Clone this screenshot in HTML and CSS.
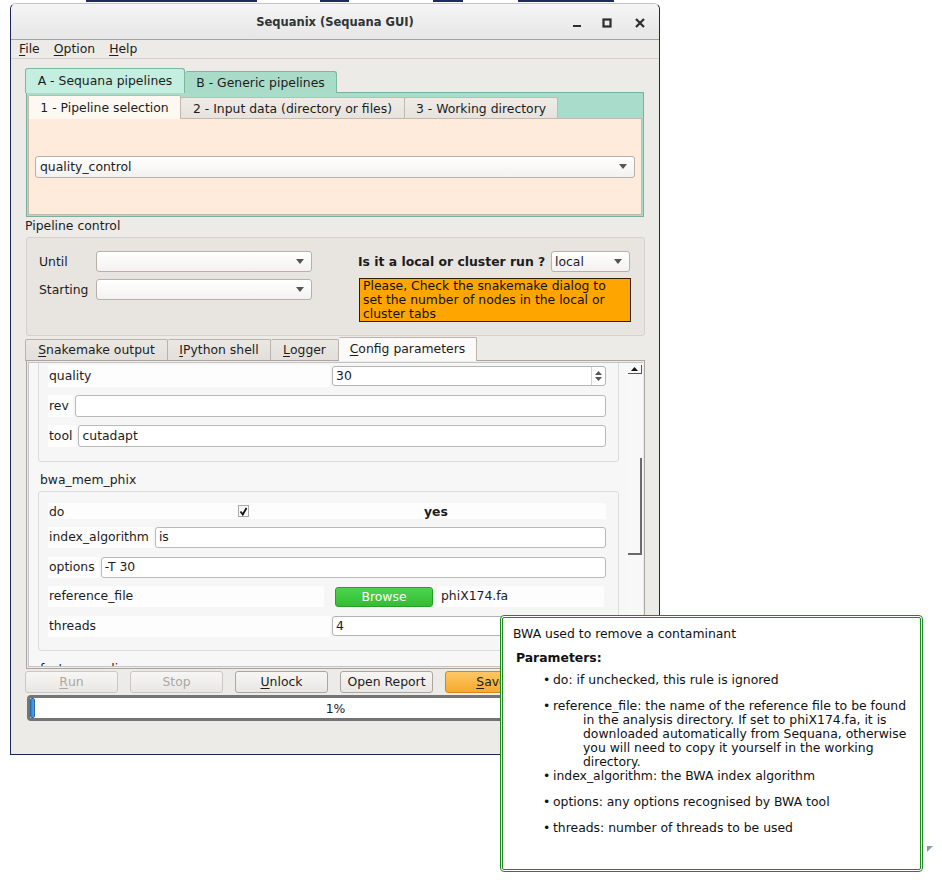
FILE: index.html
```html
<!DOCTYPE html>
<html>
<head>
<meta charset="utf-8">
<title>Sequanix (Sequana GUI)</title>
<link rel="stylesheet" href="styles.css">
</head>
<body>
<div class="desk">
  <div class="topstrip">
    <span class="seg s1"></span><span class="seg s2"></span><span class="seg s3"></span><span class="seg s4"></span>
  </div>
  <div class="window">
    <div class="titlebar">
      <div class="tb-side"></div>
      <div class="title">Sequanix (Sequana GUI)</div>
      <div class="tb-side wm">
        <svg class="wm-min" width="10" height="10" viewBox="0 0 10 10"><rect x="1" y="7" width="8" height="2" fill="#2e2e2e"/></svg>
        <svg class="wm-max" width="10" height="10" viewBox="0 0 10 10"><rect x="1.5" y="1.5" width="7" height="7" fill="none" stroke="#2e2e2e" stroke-width="2.2"/></svg>
        <svg class="wm-close" width="10" height="10" viewBox="0 0 10 10"><path d="M1 1 L9 9 M9 1 L1 9" stroke="#2e2e2e" stroke-width="2.2"/></svg>
      </div>
    </div>
    <div class="menubar">
      <span class="mi"><u>F</u>ile</span>
      <span class="mi"><u>O</u>ption</span>
      <span class="mi"><u>H</u>elp</span>
    </div>

    <div class="content">
      <div class="otabs">
        <div class="obar">
          <div class="otab ota sel">A - Sequana pipelines</div>
          <div class="otab otb">B - Generic pipelines</div>
        </div>
        <div class="opane">
          <div class="ibar">
            <div class="itab it1 sel">1 - Pipeline selection</div>
            <div class="itab it2">2 - Input data (directory or files)</div>
            <div class="itab it3">3 - Working directory</div>
          </div>
          <div class="ipane">
            <div class="combo combo-main">
              <span class="ctext">quality_control</span>
              <svg class="arrow" width="8" height="5" viewBox="0 0 8 5"><path d="M0 0 H8 L4 5 Z" fill="#555"/></svg>
            </div>
          </div>
        </div>
      </div>

      <div class="pc-label">Pipeline control</div>
      <div class="pc-group">
        <div class="pc-left">
          <div class="pc-row">
            <span class="pc-lab">Until</span>
            <div class="combo combo-pc"><span class="ctext"></span><svg class="arrow" width="8" height="5" viewBox="0 0 8 5"><path d="M0 0 H8 L4 5 Z" fill="#555"/></svg></div>
          </div>
          <div class="pc-row">
            <span class="pc-lab">Starting</span>
            <div class="combo combo-pc"><span class="ctext"></span><svg class="arrow" width="8" height="5" viewBox="0 0 8 5"><path d="M0 0 H8 L4 5 Z" fill="#555"/></svg></div>
          </div>
        </div>
        <div class="pc-right">
          <div class="pc-row">
            <span class="run-q">Is it a local or cluster run ?</span>
            <div class="combo combo-local"><span class="ctext">local</span><svg class="arrow" width="8" height="5" viewBox="0 0 8 5"><path d="M0 0 H8 L4 5 Z" fill="#555"/></svg></div>
          </div>
          <div class="note">Please, Check the snakemake dialog to<br>set the number of nodes in the local or<br>cluster tabs</div>
        </div>
      </div>

      <div class="btabs">
        <div class="bbar">
          <div class="btab bt1"><u>S</u>nakemake output</div>
          <div class="btab bt2"><u>I</u>Python shell</div>
          <div class="btab bt3"><u>L</u>ogger</div>
          <div class="btab bt4 sel"><u>C</u>onfig parameters</div>
        </div>
        <div class="bpane">
          <div class="scroll">
            <div class="viewport">
              <div class="scontent">
                <div class="grp g1">
                  <div class="frow">
                    <div class="lab grow">quality</div>
                    <div class="spin"><span class="stext">30</span><div class="sbtns"><svg width="7" height="4" viewBox="0 0 7 4"><path d="M0 4 H7 L3.5 0 Z" fill="#555"/></svg><svg width="7" height="4" viewBox="0 0 7 4"><path d="M0 0 H7 L3.5 4 Z" fill="#555"/></svg></div></div>
                  </div>
                  <div class="frow">
                    <div class="lab">rev</div>
                    <div class="edit"></div>
                  </div>
                  <div class="frow">
                    <div class="lab">tool</div>
                    <div class="edit">cutadapt</div>
                  </div>
                </div>
                <div class="gtitle">bwa_mem_phix</div>
                <div class="grp g2">
                  <div class="frow dorow">
                    <div class="dcell">do</div>
                    <div class="dcell"><span class="chk"><svg width="9" height="9" viewBox="0 0 9 9"><path d="M1.5 4.5 L3.8 7.5 L7.5 1" fill="none" stroke="#111" stroke-width="1.8"/></svg></span></div>
                    <div class="dcell yes">yes</div>
                  </div>
                  <div class="frow r2">
                    <div class="lab">index_algorithm</div>
                    <div class="edit">is</div>
                  </div>
                  <div class="frow r2">
                    <div class="lab">options</div>
                    <div class="edit">-T 30</div>
                  </div>
                  <div class="frow r2">
                    <div class="lab lwide">reference_file</div>
                    <div class="browse">Browse</div>
                    <div class="fname">phiX174.fa</div>
                  </div>
                  <div class="frow r2">
                    <div class="lab lwide2">threads</div>
                    <div class="spin"><span class="stext">4</span><div class="sbtns"><svg width="7" height="4" viewBox="0 0 7 4"><path d="M0 4 H7 L3.5 0 Z" fill="#555"/></svg><svg width="7" height="4" viewBox="0 0 7 4"><path d="M0 0 H7 L3.5 4 Z" fill="#555"/></svg></div></div>
                  </div>
                </div>
                <div class="gtitle">fastq_sampling</div>
              </div>
            </div>
            <div class="vbar">
              <div class="vup"><svg width="7" height="4" viewBox="0 0 7 4"><path d="M0 4 H7 L3.5 0 Z" fill="#111"/></svg></div>
              <div class="vslider"></div>
            </div>
          </div>
        </div>
      </div>

      <div class="buttons">
        <div class="btn dis"><u>R</u>un</div>
        <div class="btn dis">Stop</div>
        <div class="btn"><u>U</u>nlock</div>
        <div class="btn">Open Report</div>
        <div class="btn save"><u>S</u>ave</div>
      </div>
      <div class="progress">
        <div class="chunk"></div>
        <span class="ptext">1%</span>
      </div>
    </div>
  </div>

  <div class="tip">
    <p class="tip-title">BWA used to remove a contaminant</p>
    <p class="tip-h">Parameters:</p>
    <ul class="tip-list">
      <li>do: if unchecked, this rule is ignored</li>
      <li>reference_file: the name of the reference file to be found<span class="cont">in the analysis directory. If set to phiX174.fa, it is<br>downloaded automatically from Sequana, otherwise<br>you will need to copy it yourself in the working<br>directory.</span></li>
      <li class="tight">index_algorithm: the BWA index algorithm</li>
      <li>options: any options recognised by BWA tool</li>
      <li>threads: number of threads to be used</li>
    </ul>
  </div>
  <svg class="grip" width="6" height="6" viewBox="0 0 6 6"><path d="M0 0 H6 L0 6 Z" fill="#8c98ae"/></svg>
</div>
</body>
</html>
```

FILE: styles.css
```css
* { box-sizing: border-box; }
body {
  margin: 0;
  background: #fff;
  font-family: "DejaVu Sans", "Noto Sans", sans-serif;
  font-size: 12.4px;
  color: #1c1c1c;
}
u { text-decoration: underline; text-underline-offset: 2px; }

.desk {
  position: relative;
  width: 942px;
  height: 892px;
  overflow: hidden;
  background: #fff;
}

/* background window fragments at top */
.topstrip { height: 3px; display: flex; align-items: flex-start; }
.seg { height: 2px; background: #1f2a5c; display: block; }
.s1 { margin-left: 86px; width: 171px; }
.s2 { margin-left: 63px; width: 29px; }
.s3 { margin-left: 84px; width: 30px; }
.s4 { margin-left: 55px; width: 96px; }

.window {
  margin-left: 10px;
  width: 650px;
  height: 752px;
  border: 1px solid #1d2552;
  border-top: 1px solid #c4c4c4;
  border-radius: 6px 6px 0 0;
  background: #edebe7;
  display: flex;
  flex-direction: column;
  overflow: hidden;
}

.titlebar {
  height: 36px;
  flex: none;
  display: grid;
  grid-template-columns: 1fr auto 1fr;
  align-items: center;
  background: linear-gradient(#f5f5f5, #e6e6e6);
  border-bottom: 1px solid #a3a3a3;
  border-radius: 5px 5px 0 0;
}
.title {
  font-weight: bold;
  font-size: 11.5px;
  color: #2e3436;
  padding-top: 1px;
}
.wm { display: flex; justify-content: flex-end; align-items: center; padding-top: 2px; }
.wm svg { display: block; }
.wm-min { margin-right: 20px; }
.wm-max { margin-right: 23px; }
.wm-close { margin-right: 14px; }

.menubar {
  height: 19px;
  flex: none;
  display: flex;
  align-items: center;
  padding-left: 1px;
  border-bottom: 1px solid #d5d1cc;
}
.mi { padding: 0 7px; line-height: 18px; }

.content {
  flex: 1;
  padding: 9px 14px 0 15px;
  display: flex;
  flex-direction: column;
}

/* outer tabs */
.obar { display: flex; align-items: flex-end; height: 25px; margin-bottom: -1px; }
.otab {
  height: 22px;
  display: flex; align-items: center; justify-content: center;
  padding-bottom: 1px;
  background: #a8dcc9;
  border: 1px solid #7fb6a1;
  border-bottom: none;
  border-radius: 3px 3px 0 0;
  color: #1c1c1c;
}
.ota { width: 160px; margin-left: -1px; }
.otb { width: 152px; border-left: none; }
.otab.sel { height: 25px; background: #c4eee0; position: relative; z-index: 1; }
.opane {
  height: 125px;
  margin-right: 1px;
  background: #a9dcca;
  border: 1px solid #78b09b;
  padding: 2px 1px 1px 1px;
  display: flex;
  flex-direction: column;
}
.ibar { display: flex; align-items: flex-end; height: 24px; margin-bottom: -1px; }
.itab {
  height: 22px;
  display: flex; align-items: center; justify-content: center;
  padding-bottom: 1px;
  background: linear-gradient(#efebe7, #e6e2dd);
  border: 1px solid #c3b9ae;
  border-bottom: none;
  border-radius: 2px 2px 0 0;
}
.it1 { width: 153px; }
.it2 { width: 224px; border-left: none; }
.it3 { width: 153px; border-left: none; }
.itab.sel { height: 24px; background: #fef8f2; position: relative; z-index: 1; }
.ipane {
  flex: 1;
  background: #feebdc;
  border: 1px solid #c6b8aa;
  display: flex;
  align-items: center;
  padding: 0 6px 0 6px;
}

.combo {
  height: 22px;
  display: flex;
  align-items: center;
  justify-content: space-between;
  background: linear-gradient(#ffffff, #f4f2f0);
  border: 1px solid #b7b1aa;
  border-radius: 3px;
  padding: 0 7px 1px 4px;
}
.combo .arrow { display: block; }
.combo-main { width: 600px; }

/* pipeline control */
.pc-label { height: 20px; line-height: 17px; margin-left: -1px; }
.pc-group {
  height: 99px;
  background: #e8e5e1;
  border: 1px solid #d5d1cc;
  border-radius: 3px;
  display: flex;
  padding: 13px 14px 0 12px;
}
.pc-left { width: 273px; display: flex; flex-direction: column; gap: 7px; }
.pc-row { display: flex; align-items: center; height: 21px; }
.pc-lab { width: 57px; padding-bottom: 1px; }
.combo-pc { width: 216px; height: 21px; }
.pc-right { width: 272px; margin-left: 46px; display: flex; flex-direction: column; }
.run-q { font-weight: bold; width: 193px; padding-bottom: 1px; }
.combo-local { width: 79px; height: 21px; padding-left: 3px; }
.note {
  margin-top: 6px;
  margin-left: 1px;
  width: 272px;
  height: 44px;
  background: #ffa500;
  border: 1px solid #2b2000;
  line-height: 14px;
  padding: 0 3px;
  color: #111;
  white-space: nowrap;
}

/* bottom tabs */
.btabs { margin-top: 1px; display: flex; flex-direction: column; }
.bbar { display: flex; align-items: flex-end; height: 24px; margin-bottom: -1px; }
.btab {
  height: 22px;
  display: flex; align-items: center; justify-content: center;
  padding-bottom: 2px;
  background: linear-gradient(#ebe8e4, #e2dfdb);
  border: 1px solid #b8b3ad;
  border-bottom: none;
  border-radius: 2px 2px 0 0;
}
.bt1 { width: 143px; margin-left: -1px; }
.bt2 { width: 103px; border-left: none; }
.bt3 { width: 68px; border-left: none; }
.bt4 { width: 138px; border-left: none; }
.btab.sel { height: 24px; background: #fbfaf9; position: relative; z-index: 1; }
.bpane {
  height: 309px;
  background: #edebe7;
  border: 1px solid #aaa59f;
  padding: 1px;
}
.scroll {
  height: 100%;
  border: 1px solid #c4c4c4;
  border-right: none;
  display: flex;
  background: #f7f7f7;
}
.viewport { flex: 1; overflow: hidden; }
.scontent { margin-top: -10px; padding-left: 9px; width: 590px; }
.grp {
  border: 1px solid #dcdcdc;
  border-radius: 3px;
  background: #f6f6f6;
  padding: 11px 12px 13px 9px;
}
.g1 { padding-bottom: 14px; }
.g2 { padding-bottom: 13px; }
.frow { display: flex; align-items: center; height: 22px; gap: 2px; }
.frow + .frow { margin-top: 8px; }
.lab {
  height: 22px;
  line-height: 21px;
  padding: 0 4px 0 1px;
  background: #fdfdfd;
  white-space: nowrap;
}
.lab.grow { flex: 1; }
.lwide { width: 276px; }
.lwide2 { width: 282px; }
.edit {
  flex: 1;
  height: 22px;
  line-height: 19px;
  background: #fff;
  border: 1px solid #b9b9b9;
  border-radius: 3px;
  padding-left: 3px;
}
.spin {
  width: 274px;
  height: 20px;
  background: #fff;
  border: 1px solid #b4b4b4;
  border-radius: 3px;
  display: flex;
  align-items: center;
  justify-content: space-between;
  padding-left: 3px;
}
.stext { padding-bottom: 1px; }
.sbtns {
  height: 100%;
  width: 14px;
  border-left: 1px solid #d0d0d0;
  display: flex;
  flex-direction: column;
  align-items: center;
  justify-content: center;
  gap: 2px;
}
.sbtns svg { display: block; }
.gtitle { height: 29px; padding-top: 11px; line-height: 14px; padding-left: 2px; }

/* bwa group rows: 21px rows, 29.5px pitch */
.g2 .r2 { height: 21px; }
.g2 .r2 .lab { height: 21px; line-height: 20px; }
.g2 .r2 .edit { height: 21px; line-height: 18px; }
.g2 .frow + .frow { margin-top: 8.5px; }

.dorow { display: grid; grid-template-columns: 1fr 1fr 1fr; gap: 0; height: 16px; background: #fdfdfd; }
.g2 .dorow + .frow { margin-top: 8px; }
.dcell { padding-left: 1px; display: flex; align-items: center; height: 16px; }
.dcell:nth-child(2), .dcell:nth-child(3) { padding-left: 4px; }
.yes { font-weight: bold; }
.chk {
  width: 11px; height: 12px;
  border: 1px solid #a9a9a9;
  background: #fafafa;
  display: flex; align-items: center; justify-content: center;
}
.chk svg { display: block; }
.browse {
  margin-left: 9px;
  width: 98px;
  height: 20px;
  display: flex; align-items: center; justify-content: center;
  padding-bottom: 1px;
  color: #fff;
  background: linear-gradient(#4fd34f, #33bd33);
  border: 1px solid #27a027;
  border-radius: 3px;
}
.fname {
  flex: 1;
  height: 21px;
  line-height: 20px;
  margin-left: 2px;
  padding-left: 4px;
  background: #fdfdfd;
  margin-right: 2px;
}

.vbar { width: 17px; flex: none; background: #f8f8f8; padding: 2px 0 0 2px; }
.vup {
  width: 14px; height: 9px;
  border-right: 1px solid #555;
  border-bottom: 1px solid #555;
  display: flex; align-items: center; justify-content: center;
}
.vup svg { display: block; }
.vslider {
  margin-top: 84px;
  width: 14px;
  height: 97px;
  border-right: 2px solid #6a6a6a;
  border-bottom: 2px solid #6a6a6a;
}

/* buttons */
.buttons { display: flex; gap: 12px; margin-top: 2px; margin-left: -1px; }
.btn {
  width: 93px;
  height: 22px;
  display: flex; align-items: center; justify-content: center;
  padding-bottom: 1px;
  background: linear-gradient(#f7f6f4, #e9e7e4);
  border: 1px solid #aaa6a1;
  border-radius: 3px;
  color: #1c1c1c;
}
.btn.dis { color: #aca8a3; border-color: #cbc7c2; }
.btn.save {
  background: linear-gradient(#fdc865, #f6a92e);
  border-color: #d1891c;
}
.progress {
  margin-top: 2px;
  margin-left: 1px;
  width: 617px;
  height: 26px;
  border: 3px solid #747474;
  border-radius: 4px;
  background: #fff;
  display: grid;
  align-items: center;
}
.chunk, .ptext { grid-area: 1 / 1; }
.chunk {
  width: 5px;
  height: 20px;
  background: linear-gradient(90deg, #2f7fcf, #5aa6ec);
  border: 1px solid #2867a8;
  border-radius: 2px;
}
.ptext { justify-self: center; }

/* tooltip */
.tip {
  position: absolute;
  left: 500px;
  top: 615px;
  width: 423px;
  height: 257px;
  background: #fff;
  border: 3px double #1f8a1f;
  border-radius: 4px;
  padding: 9px 10px 0 10px;
  line-height: 14px;
  color: #111;
  white-space: nowrap;
}
.tip p { margin: 0; }
.tip-h { font-weight: bold; margin: 10px 0 0 3px !important; }
.tip-list { list-style: none; margin: 8px 0 0 30px; padding: 0; }
.tip-list li { padding-left: 10px; }
.tip-list li::before { content: "\2022"; display: inline-block; width: 10px; margin-left: -10px; }
.tip-list li + li { margin-top: 12px; }
.tip-list li.tight { margin-top: 0; }
.cont { display: block; padding-left: 30px; }

.grip { position: absolute; left: 927px; top: 846px; }
```
